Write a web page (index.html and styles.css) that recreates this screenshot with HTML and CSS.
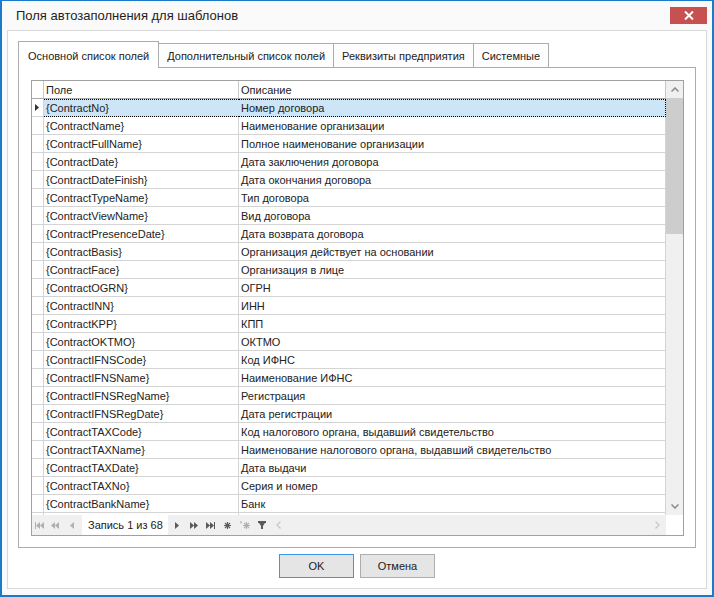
FILE: index.html
```html
<!DOCTYPE html>
<html lang="ru">
<head>
  <meta charset="UTF-8" />
  <title>Поля автозаполнения для шаблонов</title>
  <link rel="stylesheet" href="styles.css">
</head>
<body>
  <div class="window">
    <div class="titlebar">
      <span class="title">Поля автозаполнения для шаблонов</span>
      <button type="button" class="close-btn">
        <svg width="10" height="9" viewBox="0 0 10 9"><path d="M1 0.5 9 8.5M9 0.5 1 8.5" stroke="#fff" stroke-width="2"/></svg>
      </button>
    </div>

    <div class="panel">
      <div class="tabs">
        <div class="tab active">Основной список полей</div>
        <div class="tab">Дополнительный список полей</div>
        <div class="tab">Реквизиты предприятия</div>
        <div class="tab">Системные</div>
      </div>

      <div class="tab-page">
        <div class="grid">
          <div class="grid-rows">
            <table class="grid-table">
              <colgroup>
                <col class="col-ind">
                <col class="col-field">
                <col class="col-desc">
              </colgroup>
              <thead>
                <tr><th class="ind"></th><th>Поле</th><th>Описание</th></tr>
              </thead>
              <tbody>
                <tr class="selected">
                  <td class="ind"><svg width="4" height="7" viewBox="0 0 4 7"><path d="M0 0 4 3.5 0 7z" fill="#333"/></svg></td>
                  <td>{ContractNo}</td><td>Номер договора</td>
                </tr>
                <tr><td class="ind"></td><td>{ContractName}</td><td>Наименование организации</td></tr>
                <tr><td class="ind"></td><td>{ContractFullName}</td><td>Полное наименование организации</td></tr>
                <tr><td class="ind"></td><td>{ContractDate}</td><td>Дата заключения договора</td></tr>
                <tr><td class="ind"></td><td>{ContractDateFinish}</td><td>Дата окончания договора</td></tr>
                <tr><td class="ind"></td><td>{ContractTypeName}</td><td>Тип договора</td></tr>
                <tr><td class="ind"></td><td>{ContractViewName}</td><td>Вид договора</td></tr>
                <tr><td class="ind"></td><td>{ContractPresenceDate}</td><td>Дата возврата договора</td></tr>
                <tr><td class="ind"></td><td>{ContractBasis}</td><td>Организация действует на основании</td></tr>
                <tr><td class="ind"></td><td>{ContractFace}</td><td>Организация в лице</td></tr>
                <tr><td class="ind"></td><td>{ContractOGRN}</td><td>ОГРН</td></tr>
                <tr><td class="ind"></td><td>{ContractINN}</td><td>ИНН</td></tr>
                <tr><td class="ind"></td><td>{ContractKPP}</td><td>КПП</td></tr>
                <tr><td class="ind"></td><td>{ContractOKTMO}</td><td>ОКТМО</td></tr>
                <tr><td class="ind"></td><td>{ContractIFNSCode}</td><td>Код ИФНС</td></tr>
                <tr><td class="ind"></td><td>{ContractIFNSName}</td><td>Наименование ИФНС</td></tr>
                <tr><td class="ind"></td><td>{ContractIFNSRegName}</td><td>Регистрация</td></tr>
                <tr><td class="ind"></td><td>{ContractIFNSRegDate}</td><td>Дата регистрации</td></tr>
                <tr><td class="ind"></td><td>{ContractTAXCode}</td><td>Код налогового органа, выдавший свидетельство</td></tr>
                <tr><td class="ind"></td><td>{ContractTAXName}</td><td>Наименование налогового органа, выдавший свидетельство</td></tr>
                <tr><td class="ind"></td><td>{ContractTAXDate}</td><td>Дата выдачи</td></tr>
                <tr><td class="ind"></td><td>{ContractTAXNo}</td><td>Серия и номер</td></tr>
                <tr><td class="ind"></td><td>{ContractBankName}</td><td>Банк</td></tr>
                <tr><td class="ind"></td><td></td><td></td></tr>
              </tbody>
            </table>
          </div>

          <div class="vscroll">
            <div class="sb-btn">
              <svg width="8" height="5" viewBox="0 0 8 5"><path d="M0.5 4.5 4 1l3.5 3.5" fill="none" stroke="#8a8a8a" stroke-width="1.5"/></svg>
            </div>
            <div class="sb-thumb"></div>
            <div class="sb-track"></div>
            <div class="sb-btn">
              <svg width="8" height="5" viewBox="0 0 8 5"><path d="M0.5 0.5 4 4l3.5-3.5" fill="none" stroke="#8a8a8a" stroke-width="1.5"/></svg>
            </div>
          </div>

          <div class="navigator">
            <span class="nav-btn first">
              <svg width="9" height="7" viewBox="0 0 9 7"><path d="M0 0h1v7H0zM1 3.5 5 0v7zM5 3.5 9 0v7z" fill="#b0b0b0"/></svg>
            </span>
            <span class="nav-btn">
              <svg width="8" height="7" viewBox="0 0 8 7"><path d="M0 3.5 4 0v7zM4 3.5 8 0v7z" fill="#b0b0b0"/></svg>
            </span>
            <span class="nav-btn">
              <svg width="4" height="7" viewBox="0 0 4 7"><path d="M0 3.5 4 0v7z" fill="#b0b0b0"/></svg>
            </span>
            <span class="nav-info">Запись 1 из 68</span>
            <span class="nav-btn">
              <svg width="4" height="7" viewBox="0 0 4 7"><path d="M4 3.5 0 0v7z" fill="#5a5a5a"/></svg>
            </span>
            <span class="nav-btn">
              <svg width="8" height="7" viewBox="0 0 8 7"><path d="M4 3.5 0 0v7zM8 3.5 4 0v7z" fill="#5a5a5a"/></svg>
            </span>
            <span class="nav-btn">
              <svg width="9" height="7" viewBox="0 0 9 7"><path d="M4 3.5 0 0v7zM8 3.5 4 0v7zM8 0h1v7H8z" fill="#5a5a5a"/></svg>
            </span>
            <span class="nav-btn">
              <svg width="7" height="7" viewBox="0 0 7 7"><path d="M3.5 0v7M0 3.5h7M1 1l5 5M6 1 1 6" stroke="#5a5a5a" stroke-width="1.1"/></svg>
            </span>
            <span class="nav-btn">
              <svg width="10" height="8" viewBox="0 0 10 8"><path d="M1 0v2.5" stroke="#b0b0b0" stroke-width="1.2"/><path d="M6.5 1v7M3 4.5h7M4 2l5 5M9 2 4 7" stroke="#b0b0b0" stroke-width="1.1"/></svg>
            </span>
            <span class="nav-btn">
              <svg width="8" height="8" viewBox="0 0 8 8"><path d="M0 0h8v2H0zM1 2h6L5 5v3H3V5z" fill="#5a5a5a"/></svg>
            </span>
            <span class="nav-btn">
              <svg width="5" height="8" viewBox="0 0 5 8"><path d="M4.5 0.5 1 4l3.5 3.5" fill="none" stroke="#c8c8c8" stroke-width="1.3"/></svg>
            </span>
            <span class="nav-fill"></span>
            <span class="nav-btn">
              <svg width="5" height="8" viewBox="0 0 5 8"><path d="M0.5 0.5 4 4 0.5 7.5" fill="none" stroke="#c8c8c8" stroke-width="1.3"/></svg>
            </span>
          </div>
          <div class="corner"></div>
        </div>
      </div>

      <div class="dialog-buttons">
        <button type="button" class="btn default">OK</button>
        <button type="button" class="btn">Отмена</button>
      </div>
    </div>
  </div>
</body>
</html>
```

FILE: styles.css
```css
* {
  box-sizing: border-box;
  margin: 0;
  padding: 0;
}

body {
  font-family: "Liberation Sans", Arial, sans-serif;
  font-size: 11px;
  color: #222;
  background: #fff;
}

.window {
  width: 714px;
  height: 597px;
  border: 2px solid #1a7bcd;
  border-top-width: 1px;
  background: #fafafa;
  display: flex;
  flex-direction: column;
}

.titlebar {
  height: 29px;
  display: flex;
  justify-content: space-between;
  align-items: flex-start;
  padding-left: 14px;
  padding-right: 5px;
}

.title {
  font-size: 13px;
  line-height: 29px;
  color: #1e1e1e;
}

.close-btn {
  width: 37px;
  height: 17px;
  margin-top: 6px;
  border: none;
  background: #c75050;
  display: flex;
  align-items: center;
  justify-content: center;
}

.panel {
  margin: 0 5px;
  background: #fff;
  border: 1px solid #d9d9d9;
  padding: 10px;
}

/* tabs */
.tabs {
  display: flex;
  align-items: flex-end;
  height: 26px;
}

.tab {
  height: 24px;
  line-height: 25px;
  padding: 0 8px;
  border: 1px solid #acacac;
  border-left: none;
  border-bottom: none;
  background: #fdfdfd;
  white-space: nowrap;
}

.tab.active {
  height: 27px;
  line-height: 29px;
  margin-bottom: -1px;
  padding: 0 9px;
  border-left: 1px solid #acacac;
  background: #fff;
  position: relative;
  z-index: 1;
}

.tab-page {
  border: 1px solid #acacac;
  padding: 12px 10px 11px 12px;
}

/* grid */
.grid {
  width: 653px;
  height: 456px;
  border: 1px solid #a0a0a0;
  display: grid;
  grid-template-columns: 1fr 17px;
  grid-template-rows: 434px 20px;
}

.grid-rows {
  overflow: hidden;
}

.grid-table {
  table-layout: fixed;
  border-collapse: separate;
  border-spacing: 0;
  width: 634px;
}

.col-ind { width: 12px; }
.col-field { width: 195px; }
.col-desc { width: 427px; }

.grid-table th,
.grid-table td {
  height: 18px;
  padding: 0 2px;
  text-align: left;
  font-weight: normal;
  white-space: nowrap;
  overflow: hidden;
  border-right: 1px solid #d4d4d4;
  border-bottom: 1px solid #d4d4d4;
  line-height: 16px;
}

.grid-table th {
  border-bottom-color: #a8a8a8;
  border-right-color: #c8c8c8;
}

.grid-table td.ind {
  padding: 0 0 0 3px;
}

.grid-table td.ind svg {
  display: block;
}

.grid-table tr.selected td:not(.ind) {
  background: #cde6f7;
  border-top: 1px dotted #000;
  border-bottom: 1px dotted #000;
  border-right: none;
  line-height: 15px;
}

.grid-table tr.selected td:last-child {
  border-right: 1px dotted #000;
}

.vscroll {
  background: #f0f0f0;
  display: flex;
  flex-direction: column;
}

.sb-btn {
  height: 17px;
  display: flex;
  align-items: center;
  justify-content: center;
}

.sb-thumb {
  height: 136px;
  background: #cdcdcd;
}

.sb-track {
  flex: 1;
}

.navigator {
  background: #f0f0f0;
  display: flex;
  align-items: center;
}

.nav-btn {
  width: 17px;
  height: 20px;
  display: flex;
  align-items: center;
  justify-content: center;
}

.nav-btn.first {
  width: 15px;
  justify-content: flex-end;
  padding-right: 3px;
}

.nav-btn.first + .nav-btn {
  width: 16px;
}

.nav-info {
  background: #fff;
  height: 20px;
  line-height: 20px;
  width: 86px;
  margin-left: 2px;
  padding-left: 6px;
  white-space: nowrap;
  color: #222;
}

.nav-fill {
  flex: 1;
}

.corner {
  background: #fff;
}

/* buttons */
.dialog-buttons {
  display: flex;
  justify-content: center;
  gap: 6px;
  margin-top: 6px;
}

.btn {
  width: 75px;
  height: 24px;
  font-family: inherit;
  font-size: 11px;
  color: #222;
  background: #e5e5e5;
  border: 1px solid #adadad;
}

.btn.default {
  border-color: #3c96e6;
}
```
